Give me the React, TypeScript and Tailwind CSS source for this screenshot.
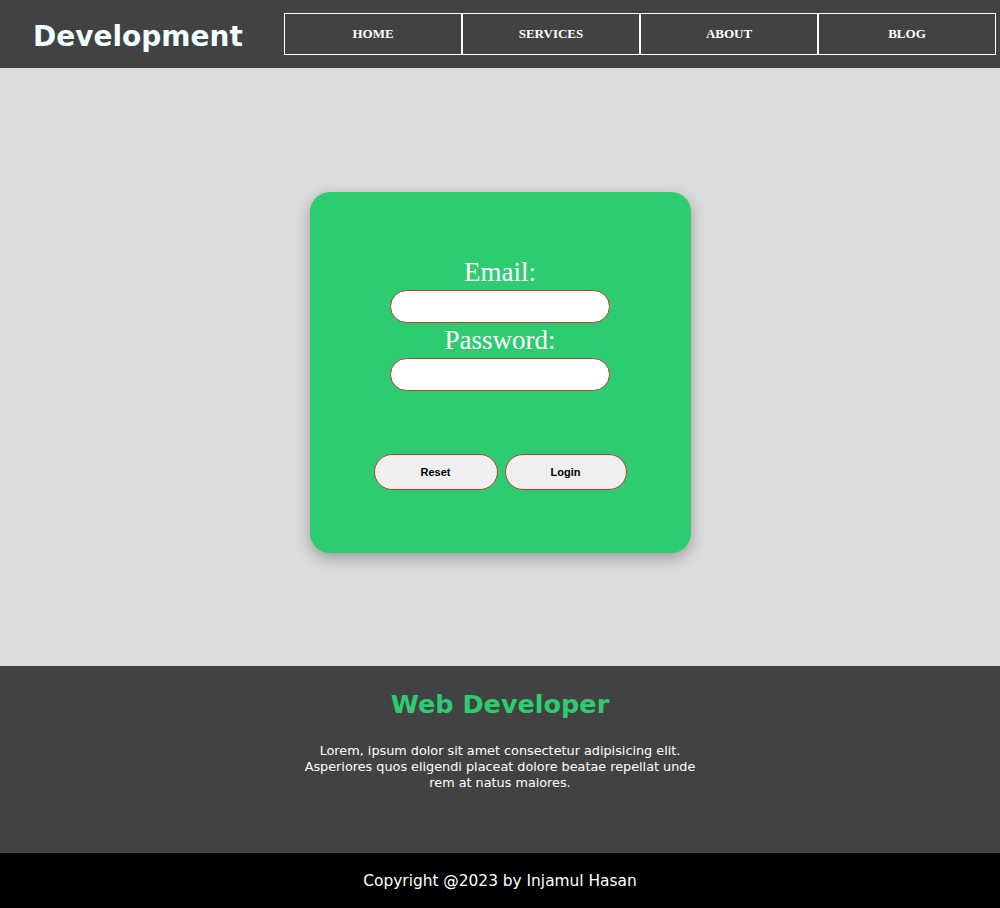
import React from "react";

export default function App() {
  const nav = ["HOME", "SERVICES", "ABOUT", "BLOG"];
  return (
    <div className="w-[1000px] min-h-[908px] flex flex-col" style={{ fontFamily: '"DejaVu Sans", Verdana, sans-serif' }}>
      <header className="h-[68px] bg-[#424242] flex items-center">
        <h1 className="w-[284px] pl-[33px] text-[28px] font-bold text-[#f0ffff] leading-none pt-[5px]">Development</h1>
        <nav className="flex">
          {nav.map((n) => (
            <a
              key={n}
              className="w-[178px] h-[42px] border border-white flex items-center justify-center text-[13px] font-bold text-white"
              style={{ fontFamily: '"Liberation Serif", "Times New Roman", serif' }}
            >
              {n}
            </a>
          ))}
        </nav>
      </header>

      <main className="h-[598px] bg-[#dcdcdc] flex items-start justify-center pt-[124px]">
        <div className="w-[381px] h-[361px] bg-[#2ecc71] rounded-[20px] shadow-[0_5px_15px_rgba(0,0,0,0.3)] flex flex-col items-center pt-[63px]"
          style={{ fontFamily: '"Liberation Serif", "Times New Roman", serif' }}>
          <label className="text-[27px] text-white leading-[35px]">Email:</label>
          <input className="w-[220px] h-[33px] rounded-full bg-white border border-[#c0392b] outline-none" />
          <label className="text-[27px] text-white leading-[35px]">Password:</label>
          <input className="w-[220px] h-[33px] rounded-full bg-white border border-[#c0392b] outline-none" />
          <div className="flex gap-[7px] mt-[63px]" style={{ fontFamily: '"Liberation Sans", Arial, sans-serif' }}>
            <button className="w-[124px] h-[36px] rounded-full bg-[#efefef] border border-[#c0392b] text-[11px] font-bold text-black">Reset</button>
            <button className="w-[122px] h-[36px] rounded-full bg-[#efefef] border border-[#c0392b] text-[11px] font-bold text-black">Login</button>
          </div>
        </div>
      </main>

      <section className="h-[187px] bg-[#424242] flex flex-col items-center pt-[23px]">
        <h2 className="text-[25.5px] font-bold text-[#2ecc71] leading-[30px]">Web Developer</h2>
        <p className="w-[400px] text-center text-[12.8px] leading-[16px] text-white mt-[24px]">
          Lorem, ipsum dolor sit amet consectetur adipisicing elit. Asperiores quos eligendi placeat dolore beatae repellat unde rem at natus maiores.
        </p>
      </section>

      <footer className="h-[55px] bg-black flex items-center justify-center pt-[3px]">
        <p className="text-[15.4px] text-white">Copyright @2023 by Injamul Hasan</p>
      </footer>
    </div>
  );
}
